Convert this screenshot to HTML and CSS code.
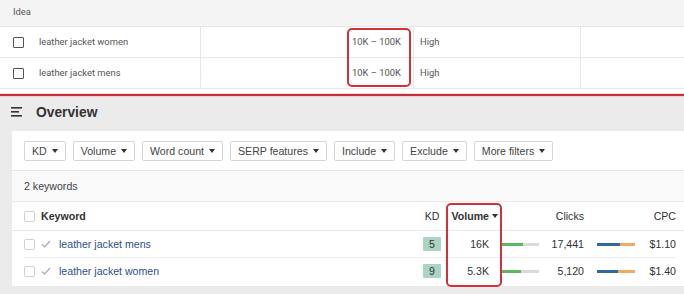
FILE: index.html
```html
<!DOCTYPE html>
<html>
<head>
  <title>Keyword ideas – Overview</title>
  <link rel="stylesheet" href="styles.css">
</head>
<body>
  <div class="ideas">
    <div class="ideas-head">Idea</div>
    <div class="idea-row">
      <div class="idea-name"><span class="box"></span>leather jacket women</div>
      <div class="idea-range">10K – 100K</div>
      <div class="idea-comp">High</div>
      <div class="idea-rest"></div>
    </div>
    <div class="idea-row">
      <div class="idea-name"><span class="box"></span>leather jacket mens</div>
      <div class="idea-range">10K – 100K</div>
      <div class="idea-comp">High</div>
      <div class="idea-rest"></div>
    </div>
    <div class="mark mark-range"></div>
  </div>

  <div class="divider"></div>

  <section class="overview">
    <h2 class="overview-title">
      <svg class="menu" width="11" height="10" viewBox="0 0 11 10">
        <rect x="0" y="0" width="11" height="1.6" fill="#333"/>
        <rect x="0" y="4" width="8" height="1.6" fill="#333"/>
        <rect x="0" y="8" width="11" height="1.6" fill="#333"/>
      </svg>
      Overview
    </h2>

    <div class="card">
      <div class="filters">
        <button>KD</button>
        <button>Volume</button>
        <button>Word count</button>
        <button>SERP features</button>
        <button>Include</button>
        <button>Exclude</button>
        <button>More filters</button>
      </div>

      <div class="count">2 keywords</div>

      <div class="kw-head">
        <span class="cb"></span>
        <span class="kw-title">Keyword</span>
        <span class="c-kd">KD</span>
        <span class="c-vol sorted">Volume</span>
        <span></span>
        <span class="c-clicks">Clicks</span>
        <span></span>
        <span class="c-cpc">CPC</span>
      </div>

      <div class="kw-row">
        <span class="cb"></span>
        <span class="tick"><svg width="10" height="8" viewBox="0 0 10 8"><polyline points="1,4.5 3.6,7 9,1" fill="none" stroke="#aaa" stroke-width="1.2"/></svg></span>
        <a class="kw" href="#">leather jacket mens</a>
        <span class="c-kd"><span class="kd">5</span></span>
        <span class="c-vol">16K</span>
        <span class="c-bar"><span class="bar"><span class="bar-fill green" style="width:58%"></span></span></span>
        <span class="c-clicks">17,441</span>
        <span class="c-bar2"><span class="bar orange"><span class="bar-fill blue" style="width:61%"></span></span></span>
        <span class="c-cpc">$1.10</span>
      </div>

      <div class="kw-row">
        <span class="cb"></span>
        <span class="tick"><svg width="10" height="8" viewBox="0 0 10 8"><polyline points="1,4.5 3.6,7 9,1" fill="none" stroke="#aaa" stroke-width="1.2"/></svg></span>
        <a class="kw" href="#">leather jacket women</a>
        <span class="c-kd"><span class="kd">9</span></span>
        <span class="c-vol">5.3K</span>
        <span class="c-bar"><span class="bar"><span class="bar-fill green" style="width:53%"></span></span></span>
        <span class="c-clicks">5,120</span>
        <span class="c-bar2"><span class="bar orange"><span class="bar-fill blue" style="width:56%"></span></span></span>
        <span class="c-cpc">$1.40</span>
      </div>

      <div class="mark mark-volume"></div>
    </div>
  </section>
</body>
</html>
```

FILE: styles.css
```css
html, body {
    margin: 0;
    padding: 0;
    overflow: hidden;
    background: #ebebeb;
}

body {
    width: 684px;
    height: 294px;
    font-family: "Liberation Sans", Arial, sans-serif;
    color: #333;
}

/* keyword ideas table (top) */

.ideas {
    position: relative;
    background: white;
    font-family: Roboto, "Liberation Sans", sans-serif;
    font-size: 9.4px;
    color: #555;
    padding-bottom: 4px;
}

.ideas-head {
    height: 27px;
    box-sizing: border-box;
    padding: 5px 0 0 13px;
    line-height: 13px;
    background: #f4f4f4;
    border-bottom: 1px solid #e6e6e6;
}

.idea-row {
    display: grid;
    grid-template-columns: 200px 213px 167px 1fr;
    height: 31px;
    box-sizing: border-box;
    border-bottom: 1px solid #e6e6e6;
    line-height: 30px;
}

.idea-row > div + div {
    border-left: 1px solid #e6e6e6;
}

.idea-name {
    display: flex;
    align-items: center;
    padding-left: 13px;
}

.idea-name .box {
    width: 9px;
    height: 9px;
    border: 1.5px solid #555;
    border-radius: 1px;
    margin-right: 15px;
}

.idea-range {
    text-align: right;
    padding-right: 12px;
}

.idea-comp {
    padding-left: 6px;
}

.mark {
    position: absolute;
    border: 2px solid #d3303c;
    border-radius: 5px;
    box-sizing: border-box;
}

.mark-range {
    left: 347px;
    top: 28px;
    width: 64px;
    height: 59px;
}

.divider {
    height: 2px;
    background: #c2303b;
    border-top: 1px solid #f6d6d8;
    border-bottom: 1px solid #f2c9cc;
}

/* overview */

.overview {
    padding: 5px 0 9px 12px;
}

.overview-title {
    display: flex;
    align-items: center;
    margin: 0 0 9px;
    height: 20px;
    font-size: 13.8px;
    font-weight: bold;
    color: #333;
}

.menu {
    margin: 0 14px 0 -1px;
}

.card {
    position: relative;
    background: white;
    margin-right: -16px;
    padding-bottom: 2px;
}

.filters {
    display: flex;
    gap: 7px;
    padding: 10px 12px 9px;
    border-bottom: 1px solid #e6e6e6;
}

.filters button {
    display: flex;
    align-items: center;
    height: 20px;
    padding: 0 7px;
    background: white;
    border: 1px solid #d6d6d6;
    border-radius: 2px;
    font-family: "Liberation Sans", Arial, sans-serif;
    font-size: 10.6px;
    color: #444;
}

.filters button::after,
.sorted::after {
    content: "";
    margin-left: 5px;
    border-left: 3px solid transparent;
    border-right: 3px solid transparent;
    border-top: 4px solid #333;
}

.count {
    height: 30px;
    line-height: 30px;
    padding-left: 12px;
    background: #f9f9fa;
    border-bottom: 1px solid #e9e9e9;
    font-size: 10.6px;
    color: #444;
}

.kw-head,
.kw-row {
    display: grid;
    grid-template-columns: 17px 18px 1fr 24px 56px 40px 45px 55px 36px;
    align-items: center;
    margin: 0 24px 0 12px;
    font-size: 10.6px;
}

.kw-head {
    height: 28px;
    margin: 0;
    padding: 0 24px 0 12px;
    border-bottom: 1px solid #e9e9e9;
}

.kw-row {
    height: 26px;
}

.kw-row + .kw-row {
    border-top: 1px solid #ececec;
}

.cb {
    width: 9px;
    height: 9px;
    border: 1px solid #d0d0d0;
    border-radius: 2px;
}

.kw-title {
    grid-column: 2 / 4;
    font-weight: bold;
}

.tick {
    display: flex;
    align-items: center;
}

.kw {
    color: #304f8e;
    text-decoration: none;
}

.c-kd {
    display: flex;
    justify-content: center;
}

.kd {
    width: 18px;
    height: 14px;
    line-height: 14px;
    text-align: center;
    background: #a9d5c2;
    border-radius: 1px;
}

.c-vol {
    text-align: right;
    padding-right: 11px;
}

.kw-head .c-vol {
    display: flex;
    justify-content: flex-end;
    align-items: center;
    padding-right: 2px;
    font-weight: bold;
}

.sorted::after {
    margin-left: 3px;
}

.c-clicks {
    text-align: right;
    padding-right: 1px;
}

.c-cpc {
    text-align: right;
}

.c-bar,
.c-bar2 {
    display: flex;
    align-items: center;
}

.c-bar {
    padding-left: 1px;
}

.c-bar2 {
    padding-left: 12px;
}

.bar {
    display: block;
    width: 38px;
    height: 3px;
    background: #dadada;
}

.bar.orange {
    background: #f2aa62;
}

.bar-fill {
    display: block;
    height: 100%;
}

.bar-fill.green {
    background: #5cb85c;
}

.bar-fill.blue {
    background: #2c69a5;
}

.mark-volume {
    left: 434px;
    top: 72px;
    width: 56px;
    height: 84px;
}
```
